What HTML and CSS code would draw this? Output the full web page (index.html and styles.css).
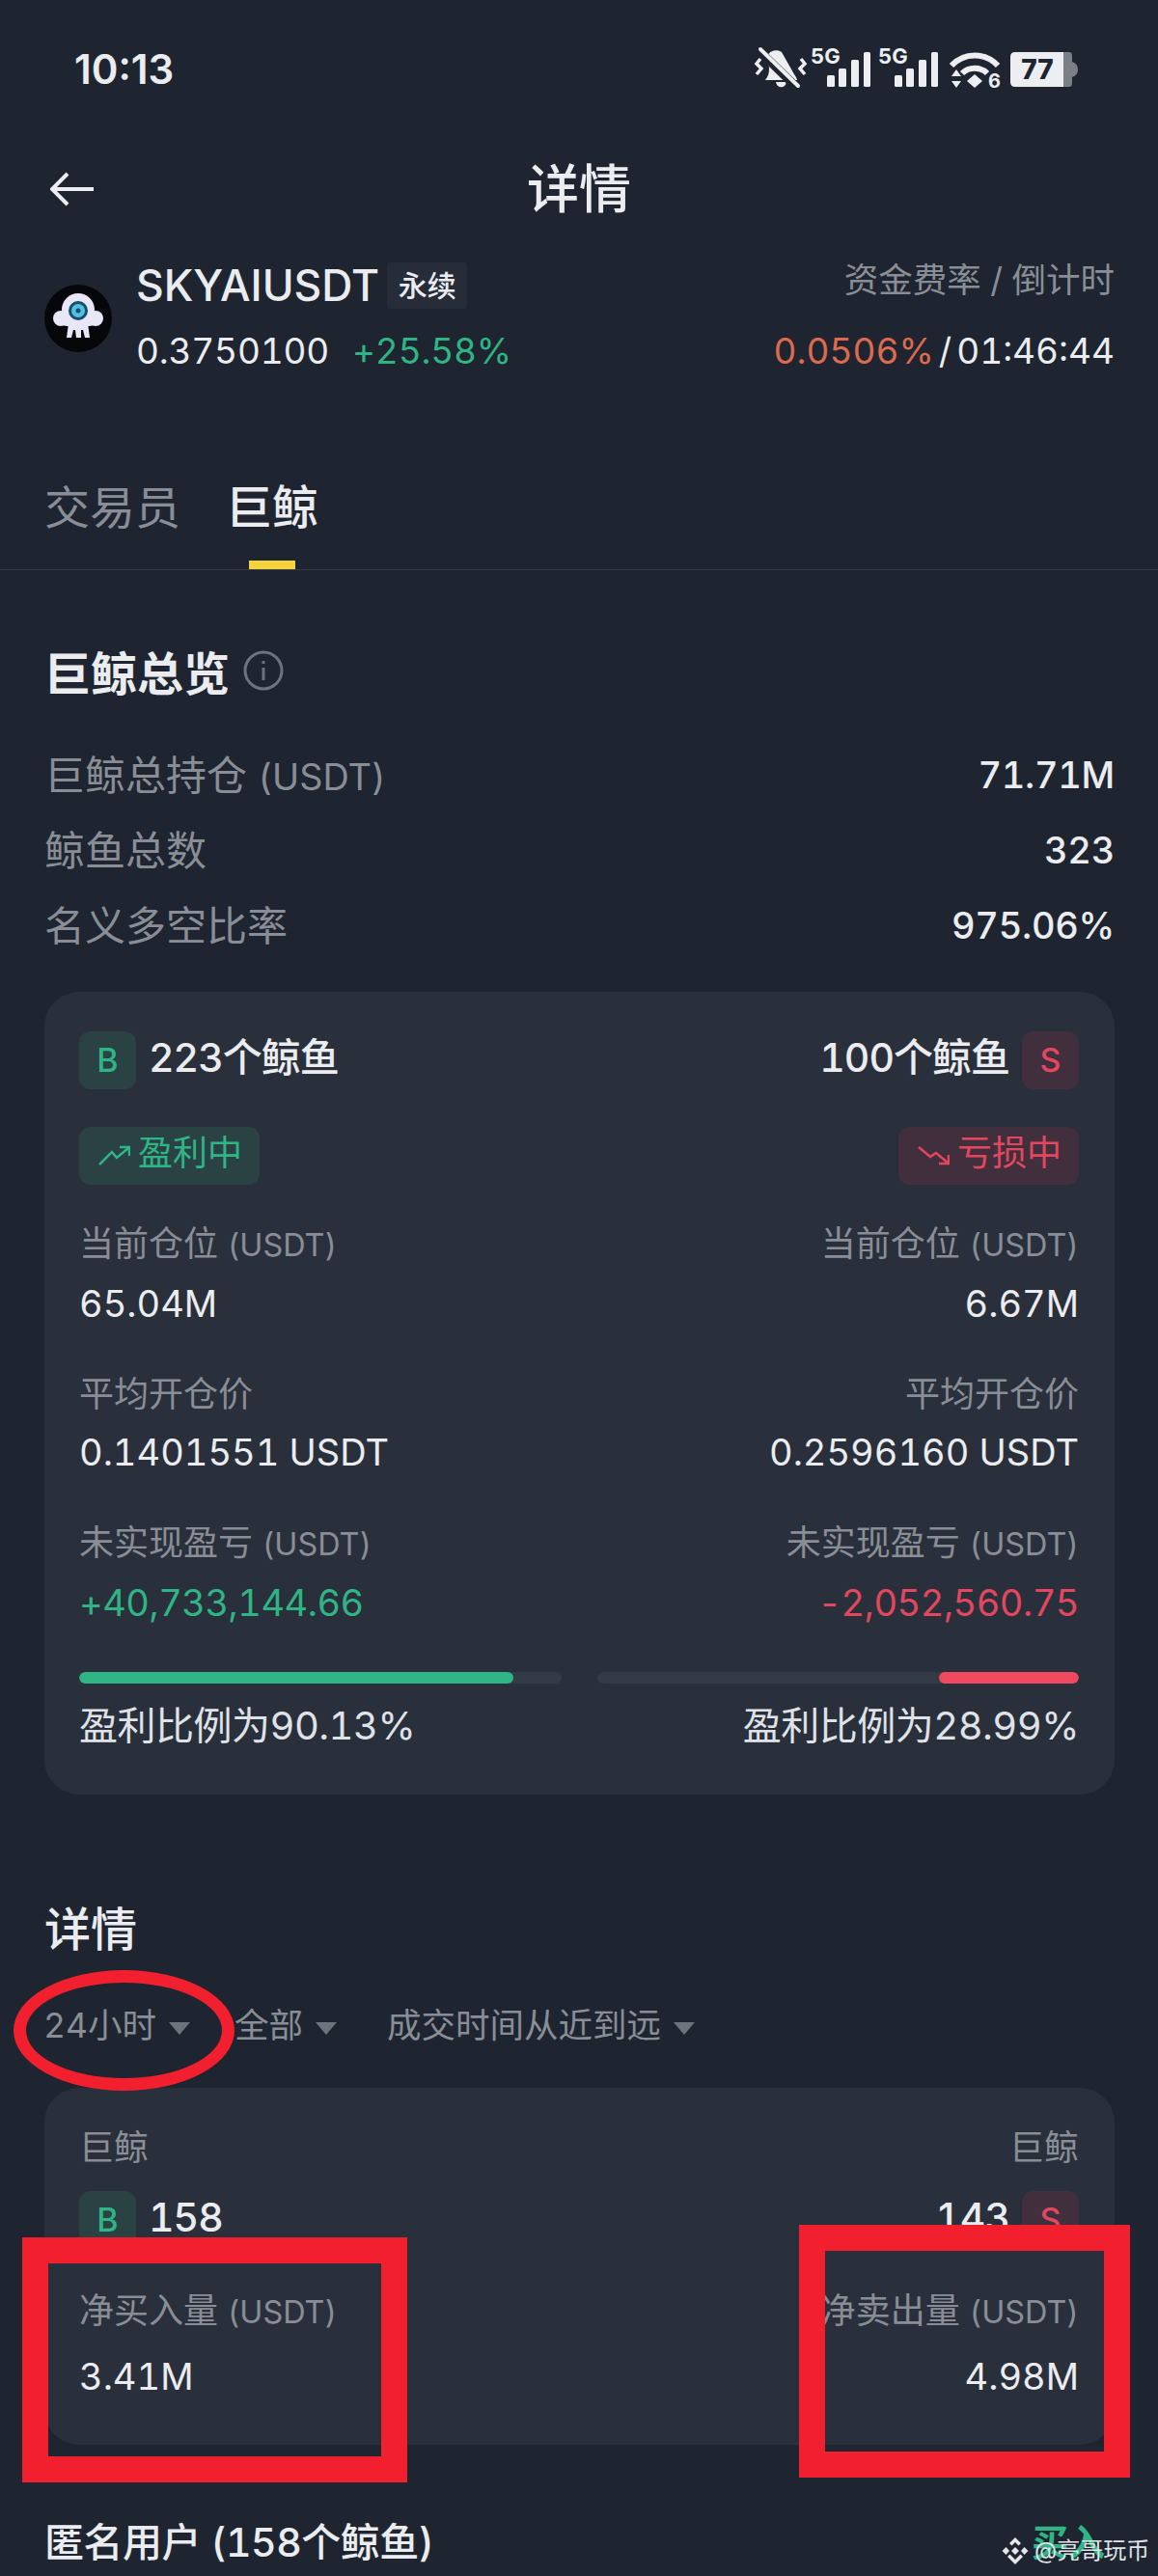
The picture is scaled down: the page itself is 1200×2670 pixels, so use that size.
FILE: index.html
```html
<!DOCTYPE html>
<html lang="zh-CN">
<head>
    <meta charset="UTF-8">
    <meta name="viewport" content="width=device-width, initial-scale=1.0">
    <title>详情</title>
    <link rel="stylesheet" href="styles.css">
</head>
<body>
    <div class="page">
        <!-- 状态栏 -->
        <div class="status">
            <span class="time">10:13</span>
            <svg class="status-icons" width="340" height="50" viewBox="0 0 340 50">
                <g fill="#eceef1">
                    <path d="M16 11 C18 6 26 5 30 8 L43 31 C45 34 46 36 46 37 L13 37 C16 33 17 30 17 25 Z"/>
                    <path d="M24 39 H35 C34 46 25 46 24 39 Z"/>
                    <rect x="77" y="32" width="8" height="12" rx="1.5"/>
                    <rect x="89" y="25" width="8" height="19" rx="1.5"/>
                    <rect x="102" y="16" width="8" height="28" rx="1.5"/>
                    <rect x="115" y="8" width="7" height="36" rx="1.5"/>
                    <rect x="147" y="32" width="8" height="12" rx="1.5"/>
                    <rect x="159" y="25" width="8" height="19" rx="1.5"/>
                    <rect x="172" y="16" width="8" height="28" rx="1.5"/>
                    <rect x="185" y="8" width="7" height="36" rx="1.5"/>
                    <path d="M230 31 L238 38 L230 45 L222 38 Z"/>
                    <path d="M206 33 L211 26 L216 33 Z"/>
                    <path d="M206 38 L216 38 L211 45 Z"/>
                    <path d="M272 8 H322 V44 H272 Q267 44 267 39 V13 Q267 8 272 8 Z"/>
                </g>
                <path d="M322 8 H328 Q331 8 331 12 V18 Q337 20 337 26 Q337 32 331 34 V40 Q331 44 328 44 H322 Z" fill="#7b7f86"/>
                <path d="M6 6 L44 43" stroke="#1e2530" stroke-width="9"/>
                <path d="M8 5 L47 43" stroke="#eceef1" stroke-width="4" stroke-linecap="round"/>
                <path d="M8 15 L4 20 L9 25 L4 31 M50 15 L54 20 L49 25 L54 31" fill="none" stroke="#eceef1" stroke-width="3.5"/>
                <g fill="none" stroke="#eceef1" stroke-width="6">
                    <path d="M206 22 C219 8 241 8 254 22"/>
                    <path d="M217 30 C224 23 236 23 243 30"/>
                </g>
                <text class="status-small" x="60" y="20">5G</text>
                <text class="status-small" x="130" y="20">5G</text>
                <text class="status-six" x="244" y="45">6</text>
                <text class="status-battery" x="295" y="36">77</text>
            </svg>
        </div>

        <!-- 标题 -->
        <div class="nav">
            <svg width="46" height="36" viewBox="0 0 46 36">
                <path d="M45 18 H2 M18 2 L2 18 L18 34" fill="none" stroke="#eceef1" stroke-width="4"/>
            </svg>
            <div class="nav-title">详情</div>
        </div>

        <!-- 合约信息 -->
        <div class="ticker">
            <div class="ticker-left">
                <svg width="70" height="70" viewBox="0 0 70 70">
                    <circle cx="35" cy="35" r="35" fill="#06070a"/>
                    <g fill="#e9e6f7">
                        <circle cx="35" cy="26" r="17"/>
                        <circle cx="17" cy="35" r="8"/>
                        <circle cx="53" cy="35" r="8"/>
                        <rect x="17" y="30" width="36" height="13" rx="6"/>
                        <path d="M25 40 H45 L47 55 H42 L40 47 H38 L38 55 H33 L32 47 H30 L28 55 H23 Z"/>
                    </g>
                    <circle cx="35" cy="27" r="10" fill="#12506f"/>
                    <circle cx="35" cy="27" r="7" fill="#55bfe2"/>
                    <circle cx="35" cy="27" r="2.5" fill="#12506f"/>
                </svg>
                <div>
                    <div class="ticker-name">
                        <span>SKYAIUSDT</span>
                        <span class="ticker-tag">永续</span>
                    </div>
                    <div class="ticker-price">
                        <span>0.3750100</span>
                        <span class="green">+25.58%</span>
                    </div>
                </div>
            </div>
            <div class="ticker-right">
                <div class="ticker-label">资金费率 / 倒计时</div>
                <div class="ticker-rate"><span class="orange">0.0506%</span><span class="slash">/</span>01:46:44</div>
            </div>
        </div>

        <!-- 切换 -->
        <div class="tabs">
            <div class="tab">交易员</div>
            <div class="tab active">巨鲸</div>
        </div>

        <div class="section-title first">
            <span>巨鲸总览</span>
            <svg width="42" height="42" viewBox="0 0 42 42">
                <circle cx="21" cy="21" r="19" fill="none" stroke="#6d737c" stroke-width="3"/>
                <path d="M21 18 V31 M21 11 V14" stroke="#6d737c" stroke-width="3"/>
            </svg>
        </div>

        <div class="summary">
            <div class="summary-row"><span>巨鲸总持仓 <small>(USDT)</small></span><b>71.71M</b></div>
            <div class="summary-row"><span>鲸鱼总数</span><b>323</b></div>
            <div class="summary-row"><span>名义多空比率</span><b>975.06%</b></div>
        </div>

        <!-- 多空总览卡片 -->
        <div class="card card-overview">
            <div class="side-row">
                <div class="side">
                    <span class="badge buy">B</span>
                    <span class="side-text">223个鲸鱼</span>
                </div>
                <div class="side">
                    <span class="side-text">100个鲸鱼</span>
                    <span class="badge sell">S</span>
                </div>
            </div>
            <div class="pill-row">
                <div class="pill buy">
                    <svg width="33" height="22" viewBox="0 0 33 22" fill="none" stroke="#2fb585" stroke-width="2.5">
                        <path d="M1 20 L14 7 L19 13 L31 3 M22 2 H32 V11"/>
                    </svg>
                    <span>盈利中</span>
                </div>
                <div class="pill sell">
                    <svg width="33" height="22" viewBox="0 0 33 22" fill="none" stroke="#e2475f" stroke-width="2.5">
                        <path d="M1 2 L13 12 L19 8 L31 18 M22 19 H32 V10"/>
                    </svg>
                    <span>亏损中</span>
                </div>
            </div>
            <div class="stats">
                <div class="stat">
                    <div class="stat-label">当前仓位 <small>(USDT)</small></div>
                    <div class="stat-value">65.04M</div>
                </div>
                <div class="stat right">
                    <div class="stat-label">当前仓位 <small>(USDT)</small></div>
                    <div class="stat-value">6.67M</div>
                </div>
                <div class="stat">
                    <div class="stat-label">平均开仓价</div>
                    <div class="stat-value">0.1401551 USDT</div>
                </div>
                <div class="stat right">
                    <div class="stat-label">平均开仓价</div>
                    <div class="stat-value">0.2596160 USDT</div>
                </div>
                <div class="stat">
                    <div class="stat-label">未实现盈亏 <small>(USDT)</small></div>
                    <div class="stat-value green">+40,733,144.66</div>
                </div>
                <div class="stat right">
                    <div class="stat-label">未实现盈亏 <small>(USDT)</small></div>
                    <div class="stat-value red">-2,052,560.75</div>
                </div>
            </div>
            <div class="bars">
                <div class="bar"><div class="bar-fill buy" style="width: 90.13%"></div></div>
                <div class="bar"><div class="bar-fill sell" style="width: 28.99%"></div></div>
            </div>
            <div class="ratio-row">
                <span>盈利比例为90.13%</span>
                <span>盈利比例为28.99%</span>
            </div>
        </div>

        <!-- 详情 -->
        <div class="section-title details">详情</div>
        <div class="filters">
            <div class="filter">24小时<i></i></div>
            <div class="filter">全部<i></i></div>
            <div class="filter">成交时间从近到远<i></i></div>
        </div>

        <div class="card card-details">
            <div class="whale-row">
                <span>巨鲸</span>
                <span>巨鲸</span>
            </div>
            <div class="side-row count-row">
                <div class="side">
                    <span class="badge buy">B</span>
                    <span class="side-text">158</span>
                </div>
                <div class="side">
                    <span class="side-text">143</span>
                    <span class="badge sell">S</span>
                </div>
            </div>
            <div class="stats">
                <div class="stat">
                    <div class="stat-label">净买入量 <small>(USDT)</small></div>
                    <div class="stat-value">3.41M</div>
                </div>
                <div class="stat right">
                    <div class="stat-label">净卖出量 <small>(USDT)</small></div>
                    <div class="stat-value">4.98M</div>
                </div>
            </div>
        </div>

        <div class="list-head">
            <span>匿名用户 (158个鲸鱼)</span>
            <span class="list-side">买入</span>
        </div>

        <!-- 截图上的标注 -->
        <div class="mark-ellipse"></div>
        <div class="mark-box mark-left"></div>
        <div class="mark-box mark-right"></div>

        <div class="watermark">
            <svg width="28" height="30" viewBox="0 0 28 30" fill="#e4e6ea">
                <path d="M14 1 L20 7 L17.500 9.500 L14 6 L10.500 9.500 L8 7 Z"/>
                <path d="M4.500 11 L8 15 L4.500 19 L0.500 15 Z"/>
                <path d="M23.500 11 L27.500 15 L23.500 19 L20 15 Z"/>
                <path d="M14 11 L18 15 L14 19 L10 15 Z"/>
                <path d="M14 29 L6 21 L8.500 18.500 L14 24 L19.500 18.500 L22 21 Z"/>
            </svg>
            <span>@亮哥玩币</span>
        </div>
    </div>
</body>
</html>
```

FILE: styles.css
```css
/* 基础 */
* {
    box-sizing: border-box;
}

body {
    margin: 0;
    background-color: #1e2530;
    color: #eaecef;
    font-family: Inter, "Noto Sans CJK SC", sans-serif;
    font-variant-numeric: tabular-nums;
}

.page {
    position: relative;
    width: 1200px;
    height: 2670px;
    overflow: hidden;
}

small {
    font-size: 0.9em;
}

.green {
    color: #2fb585;
}

.red {
    color: #e2475f;
}

.orange {
    color: #dd6a4e;
}

/* 状态栏 */
.status {
    display: flex;
    justify-content: space-between;
    align-items: center;
    height: 94px;
    padding: 48px 80px 0 77px;
}

.time {
    padding-top: 2px;
    font-size: 42px;
    font-weight: 600;
    font-variant-numeric: normal;
    line-height: 46px;
}

.status-icons {
    display: block;
}

.status-small {
    font-size: 22px;
    font-weight: 700;
    fill: #eceef1;
}

.status-six {
    font-size: 20px;
    font-weight: 700;
    fill: #eceef1;
}

.status-battery {
    font-size: 28px;
    font-weight: 800;
    font-variant-numeric: normal;
    fill: #1e2530;
    text-anchor: middle;
}

/* 标题 */
.nav {
    display: grid;
    grid-template-columns: 1fr auto 1fr;
    align-items: center;
    height: 80px;
    margin-top: 60px;
    padding: 0 52px;
}

.nav-title {
    padding-top: 3px;
    font-size: 54px;
    font-weight: 500;
    line-height: 80px;
}

/* 合约信息 */
.ticker {
    display: flex;
    justify-content: space-between;
    height: 116px;
    margin-top: 38px;
    padding: 0 45px 0 46px;
}

.ticker-left {
    display: flex;
    align-items: center;
    gap: 25px;
}

.ticker-name {
    display: flex;
    align-items: center;
    gap: 8px;
    height: 48px;
    font-size: 44.5px;
    font-weight: 500;
}

.ticker-tag {
    width: 83px;
    background-color: #272d38;
    border-radius: 4px;
    font-size: 30px;
    line-height: 48px;
    text-align: center;
}

.ticker-price {
    display: flex;
    gap: 24px;
    margin-top: 20px;
    font-size: 37px;
    letter-spacing: -0.2px;
    line-height: 48px;
}

.ticker-right {
    display: flex;
    flex-direction: column;
    justify-content: space-between;
    text-align: right;
}

.ticker-label {
    color: #898e96;
    font-size: 35.5px;
    line-height: 38px;
}

.ticker-rate {
    font-size: 37px;
    line-height: 48px;
}

.slash {
    margin: 0 5px;
}

/* 切换 */
.tabs {
    display: flex;
    gap: 47px;
    height: 111px;
    margin-top: 92px;
    padding: 23px 0 0 46px;
    border-bottom: 1px solid #343b46;
}

.tab {
    position: relative;
    height: 87px;
    color: #898e96;
    font-size: 47px;
    line-height: 46px;
}

.tab.active {
    color: #eaecef;
    font-size: 48px;
    font-weight: 500;
}

.tab.active::after {
    content: "";
    position: absolute;
    left: 24px;
    bottom: 0;
    width: 48px;
    height: 9px;
    background-color: #f5d33e;
}

.section-title {
    display: flex;
    align-items: center;
    gap: 14px;
    height: 50px;
    padding-left: 46px;
    font-size: 48px;
    font-weight: 700;
}

.section-title.first {
    margin-top: 79px;
}

.section-title.details {
    margin-top: 111px;
    font-weight: 500;
}

/* 总览行 */
.summary {
    margin-top: 44px;
    padding: 0 45px 0 46px;
}

.summary-row {
    display: flex;
    justify-content: space-between;
    align-items: center;
    height: 78px;
    color: #898e96;
    font-size: 42px;
}

.summary-row span {
    margin-top: -6px;
}

.summary-row b {
    color: #eaecef;
    font-size: 38px;
    font-weight: 500;
    letter-spacing: -0.3px;
}

/* 卡片 */
.card {
    margin: 0 45px 0 46px;
    background-color: #2a303b;
    border-radius: 36px;
    padding-left: 36px;
    padding-right: 37px;
}

.card-overview {
    margin-top: 30px;
    padding-top: 41px;
    padding-bottom: 47px;
}

.card-details {
    margin-top: 42px;
    padding-top: 40px;
    padding-bottom: 47px;
}

.side-row,
.pill-row,
.ratio-row,
.whale-row {
    display: flex;
    justify-content: space-between;
}

.side {
    display: flex;
    align-items: center;
    gap: 13px;
    font-size: 41px;
    font-weight: 500;
    letter-spacing: -1px;
    line-height: 48px;
}

.side-text {
    padding-bottom: 6px;
}

.badge {
    width: 59px;
    height: 60px;
    border-radius: 12px;
    font-size: 34px;
    letter-spacing: 0;
    line-height: 60px;
    text-align: center;
}

.badge.buy,
.pill.buy {
    background-color: #2b4245;
    color: #2fb585;
}

.badge.sell,
.pill.sell {
    background-color: #422f3d;
    color: #e2475f;
}

.pill-row {
    margin-top: 39px;
}

.pill {
    display: flex;
    align-items: center;
    gap: 8px;
    height: 60px;
    padding: 0 18px 0 20px;
    border-radius: 12px;
    font-size: 36px;
    line-height: 44px;
}

.pill span {
    padding-bottom: 6px;
}

.stats {
    display: grid;
    grid-template-columns: 1fr 1fr;
    row-gap: 48px;
    margin-top: 39px;
}

.stat-label {
    color: #898e96;
    font-size: 36px;
    line-height: 44px;
}

.stat-value {
    margin-top: 14px;
    font-size: 38px;
    line-height: 48px;
}

.stat-value.green,
.stat-value.red {
    letter-spacing: -0.5px;
}

.stat.right {
    text-align: right;
}

.bars {
    display: grid;
    grid-template-columns: 1fr 1fr;
    column-gap: 37px;
    margin-top: 48px;
}

.bar {
    display: flex;
    height: 12px;
    background-color: #333c46;
    border-radius: 6px;
    overflow: hidden;
}

.bars .bar:last-child {
    justify-content: flex-end;
}

.bar-fill {
    border-radius: 6px;
}

.bar-fill.buy {
    background-color: #2fb585;
}

.bar-fill.sell {
    background-color: #f0485f;
}

.ratio-row {
    margin-top: 20px;
    color: #dfe2e7;
    font-size: 40px;
    letter-spacing: -0.5px;
    line-height: 48px;
}

/* 筛选 */
.filters {
    display: flex;
    gap: 50px;
    margin-top: 57px;
    padding-left: 45px;
    color: #898e96;
    font-size: 35.5px;
    line-height: 44px;
}

.filter {
    display: flex;
    align-items: center;
    gap: 13px;
}

.filter:first-child {
    margin-right: -4px;
}

.filter:nth-child(2) {
    margin-right: 2px;
}

.filter i {
    width: 0;
    height: 0;
    margin-top: 4px;
    border-top: 13px solid #6d737c;
    border-left: 11px solid transparent;
    border-right: 11px solid transparent;
}

.whale-row {
    color: #898e96;
    font-size: 36px;
    line-height: 44px;
}

.count-row {
    margin-top: 23px;
}

.card-details .stats {
    margin-top: 42px;
}

.card-details .stat-value {
    margin-top: 20px;
}

/* 列表头 */
.list-head {
    display: flex;
    justify-content: space-between;
    height: 50px;
    margin-top: 76px;
    padding: 0 55px 0 46px;
    font-size: 41px;
    font-weight: 500;
    letter-spacing: -0.5px;
    line-height: 50px;
}

.list-side {
    color: #2fb585;
    font-size: 38px;
    font-weight: 700;
    letter-spacing: 0;
}

/* 标注 */
.mark-ellipse {
    position: absolute;
    left: 14px;
    top: 2042px;
    width: 229px;
    height: 125px;
    border: 13px solid #f2202e;
    border-radius: 50%;
}

.mark-box {
    position: absolute;
    border: 27px solid #f2202e;
}

.mark-left {
    left: 23px;
    top: 2319px;
    width: 399px;
    height: 254px;
}

.mark-right {
    left: 828px;
    top: 2306px;
    width: 343px;
    height: 262px;
}

.watermark {
    position: absolute;
    left: 1038px;
    top: 2629px;
    display: flex;
    align-items: center;
    gap: 6px;
    color: #dfe2e7;
    font-size: 24px;
    line-height: 30px;
}
```
